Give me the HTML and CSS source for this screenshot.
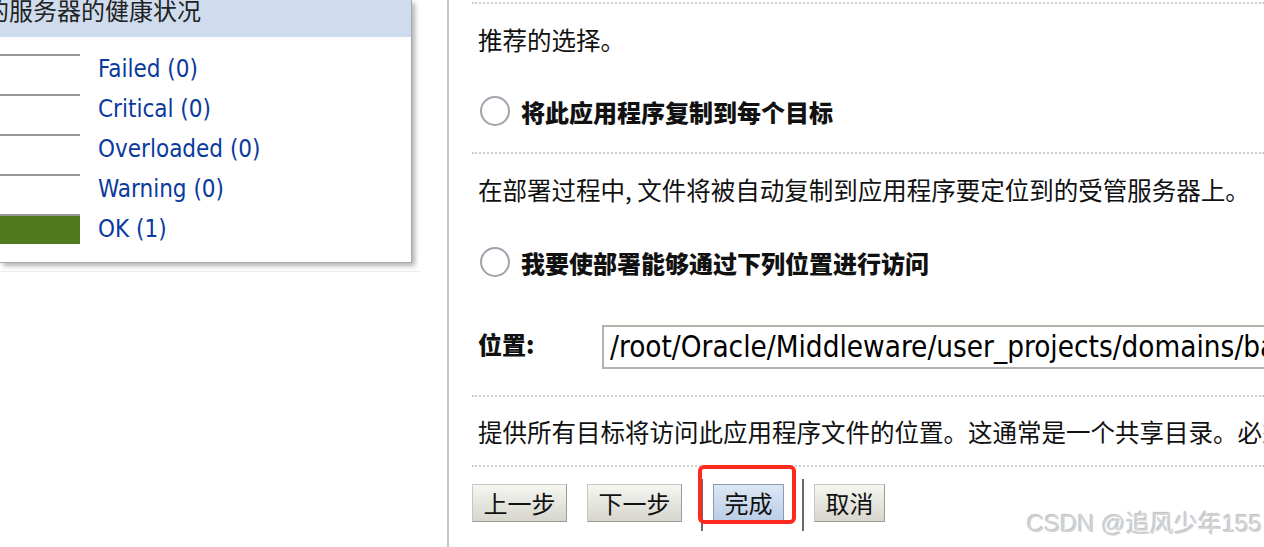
FILE: index.html
```html
<!DOCTYPE html>
<html lang="zh-CN">
<head>
    <meta charset="UTF-8">
    <title>部署应用程序助手</title>
    <link rel="stylesheet" href="styles.css">
</head>
<body>
    <div class="page">
        <div class="side">
            <div class="health">
                <div class="health-head"><span class="health-title">的服务器的健康状况</span></div>
                <div class="health-body">
                    <div class="health-row"><span class="bar"></span><a class="health-link" href="#">Failed (0)</a></div>
                    <div class="health-row"><span class="bar"></span><a class="health-link" href="#">Critical (0)</a></div>
                    <div class="health-row"><span class="bar"></span><a class="health-link" href="#">Overloaded (0)</a></div>
                    <div class="health-row"><span class="bar"></span><a class="health-link" href="#">Warning (0)</a></div>
                    <div class="health-row"><span class="bar bar-ok"></span><a class="health-link" href="#">OK (1)</a></div>
                </div>
            </div>
            <div class="side-rule"></div>
        </div>

        <div class="main">
            <div class="section section-first">
                <p class="note">推荐的选择。</p>
                <div class="choice"><span class="radio"></span><span class="choice-label">将此应用程序复制到每个目标</span></div>
            </div>
            <div class="section section-second">
                <p class="note">在部署过程中, 文件将被自动复制到应用程序要定位到的受管服务器上。</p>
                <div class="choice"><span class="radio"></span><span class="choice-label">我要使部署能够通过下列位置进行访问</span></div>
                <div class="location">
                    <span class="location-label">位置:</span>
                    <input class="location-input" type="text" value="/root/Oracle/Middleware/user_projects/domains/base_domain/servers/AdminServer/upload">
                </div>
            </div>
            <div class="section section-third">
                <p class="note">提供所有目标将访问此应用程序文件的位置。这通常是一个共享目录。必须确保应用程序文件在该位置中存在。</p>
            </div>
            <div class="section section-buttons">
                <button class="btn">上一步</button>
                <button class="btn">下一步</button>
                <span class="btn-sep"></span>
                <span class="marked">
                    <button class="btn btn-primary">完成</button>
                    <span class="mark-box"></span>
                </span>
                <span class="btn-sep"></span>
                <button class="btn">取消</button>
            </div>
        </div>
    </div>
    <div class="watermark">CSDN @追风少年155</div>
</body>
</html>
```

FILE: styles.css
```css
body {
    margin: 0;
    background-color: #fff;
    color: #111;
    font-family: "DejaVu Sans", "Noto Sans CJK SC", sans-serif;
    font-stretch: condensed;
    width: 1264px;
    height: 547px;
    overflow: hidden;
    position: relative;
}
.page {
    display: flex;
    height: 547px;
}
.side {
    width: 447px;
    flex: none;
}
.health {
    width: 411px;
    background-color: #fff;
    border-right: 1px solid #a8a8a8;
    border-bottom: 1px solid #a8a8a8;
    box-shadow: 3px 3px 5px rgba(0, 0, 0, 0.3);
}
.health-head {
    height: 37px;
    background-color: #cfdcee;
    overflow: hidden;
}
.health-title {
    display: block;
    margin-top: -5px;
    margin-left: -15px;
    font-family: "Noto Sans CJK SC", sans-serif;
    font-size: 24px;
    line-height: 30px;
    color: #222;
    white-space: nowrap;
}
.health-body {
    padding: 17px 0 8px;
}
.health-row {
    display: flex;
    align-items: flex-start;
    height: 40px;
}
.bar {
    width: 80px;
    height: 0;
    border-top: 2px solid #9a9a9a;
    flex: none;
}
.bar-ok {
    height: 28px;
    background-color: #4f7a1e;
}
.health-link {
    margin-left: 18px;
    font-size: 24px;
    line-height: 31px;
    color: #0a3a9e;
    text-decoration: none;
}
.side-rule {
    width: 420px;
    margin-top: 8px;
    border-top: 1px solid #ececec;
}
.main {
    flex: 1;
    min-width: 0;
    overflow: hidden;
    border-left: 2px solid #c4c8c8;
    padding: 2px 0 0 23px;
}
.section {
    border-top: 2px dotted #cfcfcf;
}
.section-first {
    padding: 20px 0 25px;
}
.section-second {
    padding: 20px 0 26px;
}
.section-third {
    padding: 19px 0 17px;
}
.section-buttons {
    padding-top: 17px;
    display: flex;
    align-items: flex-start;
}
.note {
    margin: 0;
    padding-left: 6px;
    font-family: "Noto Sans CJK SC", sans-serif;
    font-size: 24.5px;
    line-height: 32px;
    white-space: nowrap;
}
.choice {
    display: flex;
    align-items: center;
    height: 32px;
    padding-left: 8px;
    margin-top: 39px;
}
.section-second .choice {
    margin-top: 40px;
}
.radio {
    width: 26px;
    height: 26px;
    border: 2px solid #a2a2ac;
    border-radius: 50%;
    background-color: #fff;
    flex: none;
}
.choice-label {
    margin-left: 11px;
    font-family: "Noto Sans CJK SC", sans-serif;
    font-weight: 900;
    font-size: 24px;
    white-space: nowrap;
}
.location {
    display: flex;
    align-items: center;
    margin-top: 47px;
}
.location-label {
    width: 130px;
    padding-left: 6px;
    box-sizing: border-box;
    flex: none;
    font-family: "Noto Sans CJK SC", sans-serif;
    font-weight: 900;
    font-size: 24px;
    margin-top: -8px;
}
.location-input {
    width: 900px;
    height: 44px;
    box-sizing: border-box;
    flex: none;
    border: 2px solid #b4b4ac;
    padding: 0 6px;
    font-family: "DejaVu Sans", sans-serif;
    font-stretch: condensed;
    font-size: 29.4px;
    color: #000;
    background-color: #fff;
    outline: none;
}
.btn {
    height: 38px;
    padding: 0 10.5px;
    margin: 0 20px 0 0;
    border: 1px solid #9c9c94;
    border-top-color: #c8c8c0;
    border-left-color: #c8c8c0;
    background: linear-gradient(#f6f6f2, #d6d6ce);
    font-family: "Noto Sans CJK SC", sans-serif;
    font-size: 24px;
    line-height: 34px;
    color: #111;
    cursor: pointer;
}
.btn-primary {
    margin-right: 0;
    border-color: #8a9ab4;
    background: linear-gradient(#dde7f4, #b9cde6);
}
.btn-sep {
    width: 2px;
    height: 52px;
    margin: -5px 10px 0 -1px;
    background-color: #6a6a6a;
    flex: none;
}
.marked {
    position: relative;
    display: inline-block;
    margin-right: 19px;
}
.mark-box {
    position: absolute;
    left: -15px;
    top: -19px;
    right: -12px;
    bottom: -2px;
    border: 4px solid #ff2a1f;
    border-radius: 6px;
}
.watermark {
    position: absolute;
    right: 2px;
    bottom: 8px;
    font-family: "Liberation Sans", "Noto Sans CJK SC", sans-serif;
    font-size: 24px;
    color: #d2d2d2;
    text-shadow: 1px 1px 0 #fff, -1px -1px 1px #bdbdbd;
}
```
